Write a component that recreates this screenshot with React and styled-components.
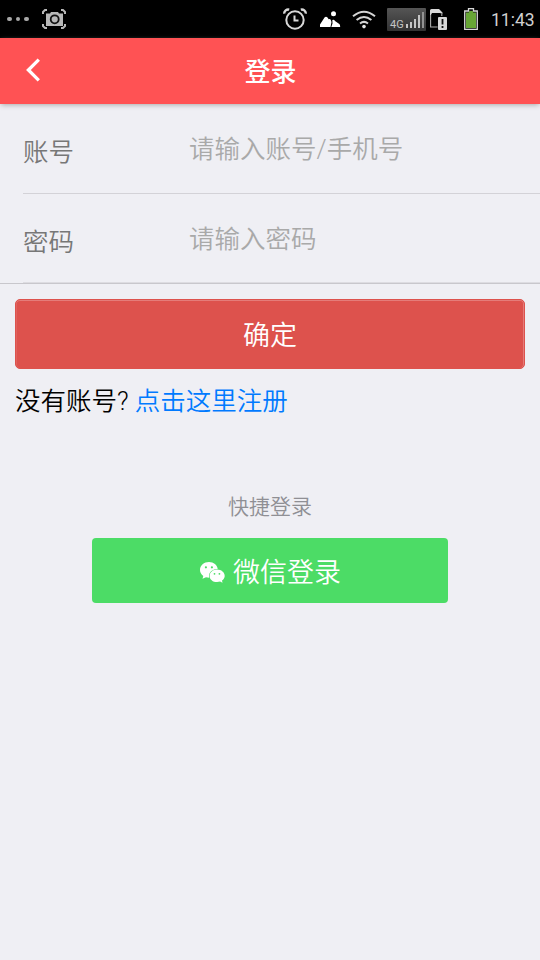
import React from 'react';
import styled, { createGlobalStyle, ThemeProvider } from 'styled-components';

const theme = {
    colors: {
        background: '#efeff4',
        header: '#ff5254',
        danger: '#dd524d',
        success: '#4cdc66',
        link: '#007aff',
        label: '#777777',
        placeholder: '#a9a9a9',
        hint: '#8f8f94',
        line: '#c8c7cc',
        status: '#d0d0d0'
    },
    font: "Roboto, 'Noto Sans CJK SC', sans-serif"
};

const fields = [
    { name: 'account', label: '账号', placeholder: '请输入账号/手机号', type: 'text' },
    { name: 'password', label: '密码', placeholder: '请输入密码', type: 'password' }
];

const ScreenshotIcon = () => (
    <svg width='24' height='20' viewBox='0 0 24 20' fill='none'>
        <path
            d='M1 5V3l2-2h2M19 1h2l2 2v2M23 15v2l-2 2h-2M5 19H3l-2-2v-2'
            stroke='#b8b8b8'
            strokeWidth='2'
        />
        <path d='M4 4.500H8L9 3h7l1 1.500h4v12.500H4z' fill='#b8b8b8' />
        <circle cx='12.7' cy='10.3' r='4' stroke='#111' strokeWidth='1.800' />
    </svg>
);

const AlarmIcon = () => (
    <svg width='24' height='22' viewBox='0 0 24 22' fill='none' stroke='#d8d8d8'>
        <circle cx='12' cy='12' r='8.7' strokeWidth='2' />
        <path d='M11.5 7.5v5h4' strokeWidth='2' />
        <path d='M1.2 5.6a4 4 0 0 1 5-4M22.8 5.6a4 4 0 0 0-5-4' strokeWidth='2.4' />
    </svg>
);

const PictureIcon = () => (
    <svg width='21' height='18' viewBox='0 0 21 18' fill='#fff'>
        <circle cx='13.5' cy='3.7' r='2.5' />
        <path d='M0 17v-2.500L4.500 7.500q1.500-1.500 3 0l1.200 1.800q1.200-.7 2 .5l.8 2.200L10.500 17z' />
        <path d='M11.300 17l1.200-3.500-.2-3.500q1.700-1 2.700 1l4.300 3q.9.600.9 3z' />
    </svg>
);

const WifiIcon = () => (
    <svg width='24' height='19' viewBox='0 0 24 19' fill='none' stroke='#d4d4d4' strokeWidth='2'>
        <path d='M1 6.2q11-9 22 0M4.6 10q7.4-6 14.8 0M8 13.5q4-3.2 8 0' />
        <circle cx='12' cy='16.6' r='1.8' fill='#e4e4e4' stroke='none' />
    </svg>
);

const SignalBars = () => (
    <svg width='20' height='19' viewBox='0 0 20 19' fill='#c4c4c4'>
        <path d='M1 14h2v4H1zM5 12h2v6H5zM9 9h2v9H9zM13 5h2v13h-2z' />
        <path d='M17 2h2v16h-2z' fill='#929292' />
    </svg>
);

const SimIcon = () => (
    <svg width='18' height='21' viewBox='0 0 18 21' fill='none'>
        <path d='M.6 4v14h7M11.800 5v2' stroke='#aaa' strokeWidth='1.100' />
        <path d='M0 1.500Q0 0 1.500 0H9l3.500 3.500V5L10 4H2L.8 6H0z' fill='#d8d8d8' />
        <rect x='8' y='8' width='9' height='13' rx='1' fill='#d8d8d8' />
        <path d='M12.5 10v5.500M12.500 17v2' stroke='#111' strokeWidth='1.800' />
    </svg>
);

const BatteryIcon = () => (
    <svg width='15' height='22' viewBox='0 0 15 22'>
        <path
            d='M.7 3h3.800V.7h5V3h3.800v18.3H.7z'
            fill='#111'
            stroke='#d8d8d8'
            strokeWidth='1.3'
        />
        <path d='M2 4.500h3V3h4v1.500h3V20H2z' fill='#68a636' />
    </svg>
);

const BackIcon = () => (
    <svg width='15' height='24' viewBox='0 0 15 24' fill='none'>
        <path d='M12.8 1.7L2.4 12l10.4 10.3' stroke='#fff' strokeWidth='3.300' />
    </svg>
);

const WechatIcon = () => (
    <svg width='25' height='21' viewBox='0 0 25 21'>
        <path
            d='M9 0c4.600 0 8.300 3.100 8.700 7-5 0-8.700 3-8.700 6.900 0 .6.1 1.200.3 1.800-1.300 0-2.200-.1-3.300-.4L2.500 16.800l.8-2.900C1.200 12.600 0 10.400 0 8 0 3.500 4 0 9 0z'
            fill='#fff'
        />
        <path
            d='M17.100 7.600c4.300 0 7.600 2.900 7.600 6.300 0 1.900-1.100 3.500-2.700 4.700l.5 2.100-2.400-1.100c-1 .3-2 .5-3 .5-4.300 0-7.500-2.800-7.500-6.200s3.200-6.300 7.500-6.300z'
            fill='#fff'
        />
        <g fill='#4cdc66'>
            <circle cx='5.900' cy='5.300' r='1.100' />
            <circle cx='11.900' cy='5.300' r='1.100' />
            <circle cx='14.500' cy='11.800' r='.9' />
            <circle cx='19.400' cy='11.800' r='.9' />
        </g>
    </svg>
);

const App = () => {
    return (
        <ThemeProvider theme={theme}>
            <GlobalStyle />
            <Page>
                <StatusBar>
                    <Dots>
                        <Dot />
                        <Dot />
                        <Dot />
                    </Dots>
                    <ScreenshotIcon />
                    <StatusIcons>
                        <AlarmIcon />
                        <PictureIcon />
                        <WifiIcon />
                        <Network>
                            <span>4G</span>
                            <SignalBars />
                        </Network>
                    </StatusIcons>
                    <SimIcon />
                    <BatteryWrapper>
                        <BatteryIcon />
                    </BatteryWrapper>
                    <Clock>11:43</Clock>
                </StatusBar>
                <Header>
                    <BackButton aria-label='back'>
                        <BackIcon />
                    </BackButton>
                    <Title>登录</Title>
                </Header>
                <Form>
                    {fields.map((field) => (
                        <Row key={field.name}>
                            <Label htmlFor={field.name}>{field.label}</Label>
                            <Input
                                id={field.name}
                                type={field.type}
                                placeholder={field.placeholder}
                            />
                        </Row>
                    ))}
                </Form>
                <Content>
                    <SubmitButton>确定</SubmitButton>
                    <Register>
                        没有账号? <a>点击这里注册</a>
                    </Register>
                </Content>
                <QuickLogin>
                    <Hint>快捷登录</Hint>
                    <WechatButton>
                        <WechatIcon />
                        <span>微信登录</span>
                    </WechatButton>
                </QuickLogin>
            </Page>
        </ThemeProvider>
    );
};

const GlobalStyle = createGlobalStyle`
    * {
        box-sizing: border-box;
    }

    body {
        margin: 0;
    }

    button, input {
        font-family: inherit;
        font-weight: inherit;
    }

    svg {
        display: block;
        flex-shrink: 0;
    }
`;

const Page = styled.div`
    min-height: 100vh;
    background-color: ${(props) => props.theme.colors.background};
    font-family: ${(props) => props.theme.font};
    font-weight: 350;
`;

const StatusBar = styled.div`
    display: flex;
    align-items: center;
    height: 38px;
    padding: 0 5px 0 7px;
    background-color: #000;
`;

const Dots = styled.div`
    display: flex;
    gap: 4px;
    margin-right: 13px;
`;

const Dot = styled.span`
    width: 4.5px;
    height: 4.5px;
    border-radius: 50%;
    background-color: #a8a8a8;
`;

const StatusIcons = styled.div`
    display: flex;
    align-items: center;
    gap: 11px;
    margin: 0 4px 0 auto;

    & > :first-child {
        margin-right: 2px;
    }
`;

const Network = styled.div`
    display: flex;
    align-items: flex-end;
    justify-content: space-between;
    width: 39px;
    height: 23px;
    padding: 0 1px 2px 3px;
    border-radius: 1px;
    background: linear-gradient(#555, #333);
    color: #c4c4c4;
    font-size: 11px;
    line-height: 9px;
    font-weight: 400;
`;

const BatteryWrapper = styled.div`
    margin: 0 12px 0 16px;
`;

const Clock = styled.div`
    width: 44px;
    padding-top: 1px;
    color: ${(props) => props.theme.colors.status};
    font-size: 17.5px;
    font-weight: 400;
    white-space: nowrap;
`;

const Header = styled.header`
    display: grid;
    grid-template-columns: 66px 1fr 66px;
    align-items: center;
    height: 66px;
    background-color: ${(props) => props.theme.colors.header};
    box-shadow: 0 2px 5px -1px #aaa;
`;

const BackButton = styled.button`
    display: flex;
    padding: 0 0 2px 26px;
    border: 0;
    background: none;
`;

const Title = styled.h1`
    margin: 0;
    padding: 2px 0 0 1px;
    color: #fff;
    font-size: 26px;
    font-weight: 500;
    line-height: 64px;
    text-align: center;
`;

const Form = styled.form`
    border-bottom: 1px solid ${(props) => props.theme.colors.line};
`;

const Row = styled.div`
    display: flex;
    height: 90px;
    margin-left: 23px;
    border-bottom: 1px solid #d3d2d7;

    &:last-child {
        height: 89px;
        border-bottom-color: #dddce1;
    }
`;

const Label = styled.label`
    width: 166px;
    padding-top: 28px;
    color: ${(props) => props.theme.colors.label};
    font-size: 25.5px;
    line-height: 40px;
`;

const Input = styled.input`
    flex: 1;
    min-width: 0;
    height: 40px;
    margin-top: 25px;
    padding: 0;
    border: 0;
    outline: 0;
    background: transparent;
    font-size: 25.5px;

    &::placeholder {
        color: ${(props) => props.theme.colors.placeholder};
    }
`;

const Content = styled.div`
    padding: 15px 15px 0;
`;

const SubmitButton = styled.button`
    display: block;
    width: 100%;
    height: 70px;
    padding: 0 0 1px;
    border: 1px solid ${(props) => props.theme.colors.danger};
    border-radius: 5px;
    background-color: ${(props) => props.theme.colors.danger};
    box-shadow: inset 0 1px #e57c79, inset 1px 0 #e0625e, inset -1px 0 #e57c79;
    color: #fff;
    font-size: 27px;
`;

const Register = styled.p`
    margin: 12px 0 0;
    color: #000;
    font-size: 25.5px;
    line-height: 40px;

    & a {
        color: ${(props) => props.theme.colors.link};
    }
`;

const QuickLogin = styled.div`
    padding: 71px 92px 0;
    text-align: center;
`;

const Hint = styled.div`
    margin-bottom: 16px;
    color: ${(props) => props.theme.colors.hint};
    font-size: 21px;
    line-height: 30px;
`;

const WechatButton = styled.button`
    display: flex;
    align-items: center;
    justify-content: center;
    gap: 8px;
    width: 100%;
    height: 65px;
    padding: 0 0 1px 1px;
    border: 0;
    border-radius: 4px;
    background-color: ${(props) => props.theme.colors.success};
    color: #fff;
    font-size: 27px;

    & svg {
        position: relative;
        top: 2px;
    }
`;

export default App;
